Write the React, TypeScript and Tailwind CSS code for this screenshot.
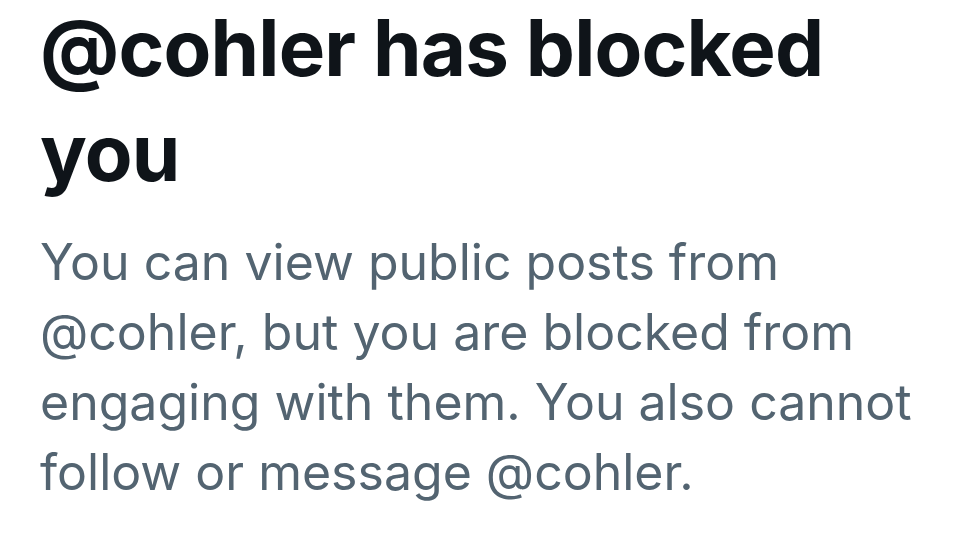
export default function App() {
  return (
    <div className="min-h-screen w-[975px] h-[536px] overflow-hidden bg-white pl-10 pr-6 font-['Inter',sans-serif]">
      <h1 className="mt-[-5px] text-[78px] leading-[105px] font-bold tracking-[-0.8px] text-[#0f1419]">
        @cohler has blocked
        <br />
        you
      </h1>
      <p className="mt-[22px] text-[50px] leading-[70px] text-[#536471]">
        You can view public posts from
        <br />
        @cohler, but you are blocked from
        <br />
        engaging with them. You also cannot
        <br />
        follow or message @cohler.
      </p>
    </div>
  )
}
